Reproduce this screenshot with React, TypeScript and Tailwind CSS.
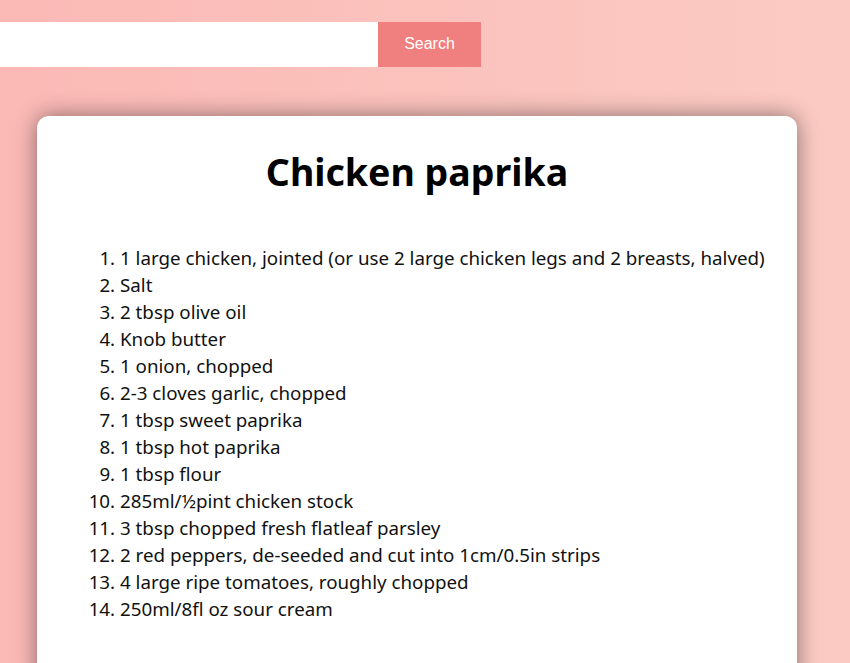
import React from "react";

const items = [
  "1 large chicken, jointed (or use 2 large chicken legs and 2 breasts, halved)",
  "Salt",
  "2 tbsp olive oil",
  "Knob butter",
  "1 onion, chopped",
  "2-3 cloves garlic, chopped",
  "1 tbsp sweet paprika",
  "1 tbsp hot paprika",
  "1 tbsp flour",
  "285ml/½pint chicken stock",
  "3 tbsp chopped fresh flatleaf parsley",
  "2 red peppers, de-seeded and cut into 1cm/0.5in strips",
  "4 large ripe tomatoes, roughly chopped",
  "250ml/8fl oz sour cream",
];

export default function App() {
  return (
    <div className="h-[663px] w-[850px] overflow-hidden bg-gradient-to-r from-[#fbb9b6] to-[#fbcbc3]">
      <div className="flex pt-[22px]">
        <input
          className="h-[45px] w-[378px] bg-white outline-none border-0"
          type="text"
        />
        <button className="h-[45px] w-[103px] bg-[#f08080] pb-[2px] text-white text-[16px] font-['Liberation_Sans',Arial,sans-serif]">
          Search
        </button>
      </div>
      <div className="ml-[37px] mt-[49px] w-[760px] h-[600px] rounded-[12px] bg-white shadow-[0_0_22px_rgba(0,0,0,0.45)] font-['Noto_Sans',sans-serif] text-black">
        <h1 className="pt-[29px] text-center text-[37.5px] font-bold leading-[54px]">
          Chicken paprika
        </h1>
        <ol className="mt-[45px] list-decimal pl-[83px] text-[18.75px] leading-[27px] text-[#111]">
          {items.map((t) => (
            <li key={t}>{t}</li>
          ))}
        </ol>
      </div>
    </div>
  );
}
